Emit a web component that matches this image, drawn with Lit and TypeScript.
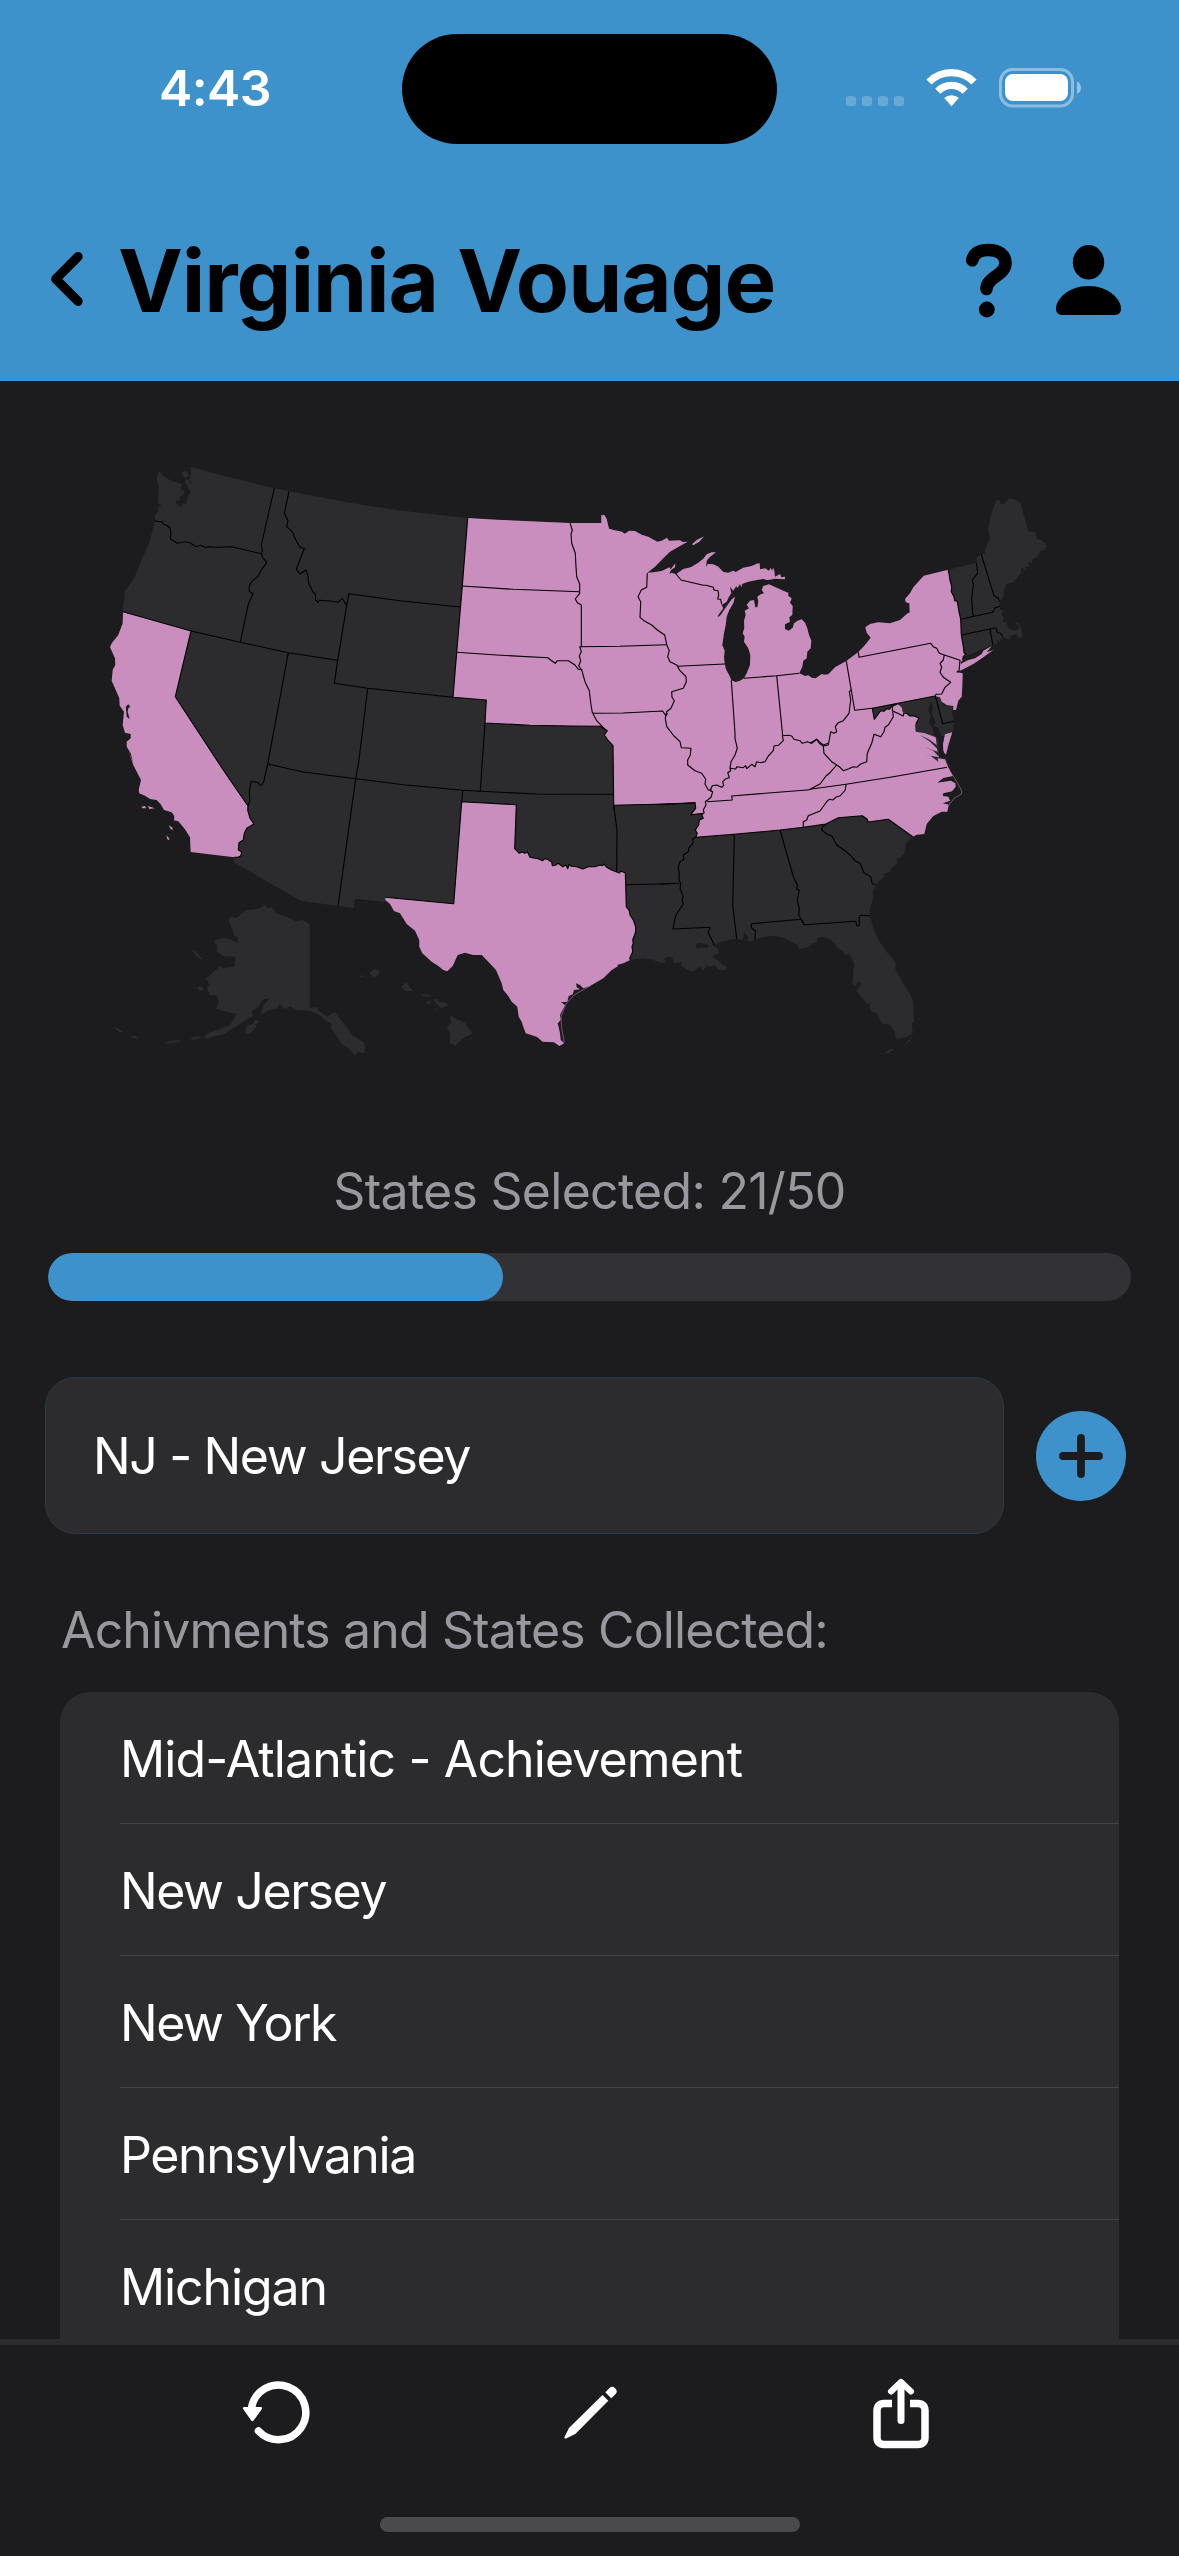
import { LitElement, html, css, svg } from "lit";
import { customElement, property } from "lit/decorators.js";

/* ---------- Map geometry ----------
   Coordinates are kept on seven sheets, three units to a pixel, each with its own origin. */
type Sheet = (points: string) => string;
const sheet = (ox: number, oy: number): Sheet => (points) => {
  const n = points.trim().split(/\s+/).map(Number);
  const out: string[] = [];
  for (let i = 0; i < n.length; i += 2) {
    out.push(`${(ox + n[i] / 3).toFixed(1)},${(oy + n[i + 1] / 3).toFixed(1)}`);
  }
  return out.join(" ");
};
const NW = sheet(90, 450);
const N = sheet(330, 450);
const GL = sheet(570, 500);
const NE = sheet(810, 480);
const SW = sheet(90, 750);
const S = sheet(370, 750);
const SE = sheet(660, 750);

const coastNorthwest =
  NW("208 63 216 75 225 82 245 93 275 102 272 118 284 122 280 135 268 140 272 150 258 153 256 158 266 165 272 173 278 160 290 162 293 140 303 125 298 110 305 98 298 88 303 75 303 50 400 77 553 115 597 124 780 158") +
  " " + N("100 165 200 180 300 192");
const coastLakes =
  N("413 204 500 209 600 214 720 219") + " " +
  GL(`94 69 94 45 104 46 110 57 117 86 134 91 156 95 164 101 178 92 195 93 215 104 235 110 262 125 275 122 291 113
    297 122 330 121 338 126 353 125 330 138 300 155 280 175 255 200 232 218 250 217 275 213 298 202 302 208 316 190
    315 202 303 210 298 222 305 218 318 223 340 207 362 202 385 188 400 176 410 163 425 157 438 157 430 163 416 174
    410 183 408 202 413 192 430 193 445 200 460 216 475 218 490 212 497 216 520 203 545 198 560 191 569 190 570 208
    585 205 597 212 602 203 606 212 610 203 613 212 615 230 630 222 634 232 645 230 645 238 615 236 600 239 590 240
    580 237 565 239 545 243 530 247 517 252 514 262 510 252 502 265 499 258 490 272 480 260 484 280 476 292 470 305
    455 315 460 325 445 345 443 352 452 345 462 330 475 312 485 298 495 290 490 310 478 330 470 350 467 375 462 400
    457 435 464 452 462 470 464 492 468 508 480 530 484 541 497 546 510 542 522 535 530 520 540 495 541 465 535 445
    522 425 524 410 518 400 523 385 522 362 527 345 524 332 537 325 530 315 540 302 552 300 556 322 562 322 565 305
    562 290 572 283 582 280 575 270 580 258 597 253 620 263 640 272 655 278 655 288 665 295 660 308 668 318 667 345
    658 352 660 365 645 373 645 387 656 392 668 383 672 370 683 362 695 358 705 368 712 385 717 405 724 422 722 445
    712 455 710 475 700 482 697 500 688 520 705 528 715 526 725 533 737 535 755 522 768 526`) + " " +
  NE(`15 596 35 585 55 583 75 562 109 543 145 516 165 495 182 473 170 458 166 442 180 432 205 427 240 430 270 420
    290 402 299 397 298 370 287 367 285 357 300 340 310 322 341 287 415 269`);
const coastNewEngland = NE(`499 248 500 232 514 223 524 222 528 200 540 175 534 150 540 125 539 117 550 85 560 60
    568 60 572 72 582 71 600 54 625 64 632 70 655 154 675 157 682 178 695 180 711 198 702 212 694 210 682 230
    668 238 665 250 655 245 656 262 645 258 648 270 632 262 635 277 620 295 607 308 590 312 582 330 580 350 570 365
    568 379 572 390 582 392 573 405 582 412 578 425 590 430 596 445 610 452 625 450 627 438 612 425 627 430 634 450
    638 472 624 474 620 462 600 468 595 478 578 470 570 485 560 478 562 492 548 494 525 505 500 515 462 530`);
const borderVermont = NE("415 269 420 300 425 320 424 335 432 350 434 362 442 364 447 395 452 418 454 465 460 500 462 518 467 522 460 530 458 542");
const coastJersey = NE("452 545 454 560 440 577 458 580 457 620 455 650 445 662 438 690 430 690 430 678 410 675 395 665 390 652");
const coastDelaware = NE("388 650 400 676 425 675 430 690 425 695 432 724 430 745 427 757");
const coastEasternShore = NE("420 780 415 805 407 823 398 830 410 840");
const coastCarolina =
  NE("415 862") + " " +
  SE(`878 78 850 84 832 98 872 92 886 100 887 110 876 124 850 130 848 138 865 140 870 152 848 160 866 164 862 185
    845 185 820 198 800 222 793 252 770 254 758 260`);
const coastSoutheast = SE(`738 280 732 312 718 325 710 328 712 340 695 355 690 365 670 372 673 380 660 390 650 403
    638 425 640 440 635 460 629 480 630 498 640 535 655 570 680 605 707 637 706 658 730 700 752 735 759 755 762 815
    755 822 758 850 740 862 712 867 704 858 706 845 690 825 665 820 655 797 648 788 635 785 628 770 632 756 622 762
    605 742 588 722 604 703 596 693 588 704 583 690 590 712 577 700 580 675 582 640 575 625 568 612 555 615 548 602
    530 592 525 582 510 568 490 561 472 564 472 577 460 580 445 592 417 597 412 585 375 565 345 557 310 560 285 569
    270 575 262 573 265 560 252 546 247 570 230 567 205 571 180 577 163 587 178 602 176 612 160 614 158 620 180 635
    185 642 200 650 197 660 180 660 160 645 150 652 140 645 130 662 120 650 97 665 75 655 62 645 66 636 40 640
    38 625 25 619 12 628 20 637 0 638`);
const coastLouisiana = S("850 630 820 625 800 627");
const coastTexas = S(`779 631 760 640 740 645 720 640 715 632 730 628 733 640 745 648 725 660 700 685 660 708 640 715
    630 705 618 700 620 712 630 718 612 720 608 733 596 738 592 755 573 757 585 765 570 795 572 810 563 820 570 850
    572 870 583 880 568 888 552 877 518 875 500 860 467 850 460 830 455 815 446 800 442 770 425 755 415 738 400 720
    395 700 378 660 355 635 335 615 310 615 285 608 263 615 248 648 232 664 220 660 205 648 185 635 157 610 148 590
    148 570 135 542 110 522 90 490 72 483 60 462 46 450 46 442`);
const coastMexico = SW("886 456 795 446 792 474 744 468 632 452 431 337 433 322");
const coastCalifornia =
  SW(`302 306 300 262 285 238 265 214 252 211 253 198 245 187 222 180 212 163 200 150 180 147 165 137 148 130
    146 120 153 90 130 45 115 0`) + " " +
  NW(`130 940 122 910 110 890 110 875 122 865 122 852 105 848 98 825 102 785 89 767 88 745 65 692 68 660 76 645
    75 625 60 592 65 580 85 555 98 520 99 485`);
const coastOregon = NW("98 470 104 440 103 425 118 405 135 378 160 318 180 270 195 215 195 195 208 180 200 178 214 165 204 160 206 110 200 95 202 75");

const borderNevada = NW("99 485 303 543 256 740 400 960") + " " + SW("474 168");
const riverColorado = SW("474 168 473 180 480 205 492 222 470 235 463 250 460 270 447 278 445 300 455 305 452 318 443 322 433 322");
const borderTexas = S(`46 442 251 461 275 155 439 164 434 296 448 310 456 306 465 310 472 305 480 322 495 325 505 326
    518 332 524 326 532 328 545 336 547 347 556 346 565 340 578 350 588 345 593 356 598 343 604 349 620 350 638 357
    655 350 675 350 690 345 698 347 702 342 710 352 725 360 748 369 752 364 766 368 767 404 769 470 778 482 780 495
    790 510 797 530 797 545 788 570 790 580 786 590 788 605 779 625 782 631`);
const borderMaryland = NE(`375 648 187 685 193 718 205 702 212 692 222 694 230 686 238 688 247 676 262 672 275 682
    278 696 290 700 300 708 312 708 327 714 315 735 317 755 345 760 377 772 380 795 360 780 330 765 360 785 380 805
    383 815 345 802 370 812 388 832 330 823 362 828 385 845 383 835 405 838`);
const borderSouth = SE(`758 260 685 208 624 216 622 208 607 197 535 203 498 222 430 232 360 240 222 253 107 262
    112 250 106 240 116 225 118 210 130 205 125 195 130 190 92 194 107 175 105 158`);
const borderPlains = GL("131 916 129 737 115 722 103 705 112 692 105 688 90 679 0 678") + " " + N("600 826 465 819 469 750 369 742 380 607 397 408 413 204");

const LAND = [
  [coastNorthwest, coastLakes, coastNewEngland, NE("458 542"), coastJersey, coastDelaware, coastEasternShore, coastCarolina,
    coastSoutheast, coastLouisiana, coastTexas, coastMexico, coastCalifornia, coastOregon].join(" "),
  // San Juan and Whidbey islands
  NW("276 68 284 62 292 66 296 76 288 84 278 78"),
  NW("284 92 292 86 300 96 306 118 300 124 292 108"),
  // Alaska
  SW(`415 512 420 500 440 503 468 480 505 477 525 464 532 474 545 472 562 492 590 500 618 514 637 509 659 522 659 773
    682 772 685 782 712 800 734 785 745 800 770 830 790 858 820 875 826 890 822 910 805 905 795 915 775 895 755 882
    740 858 722 835 726 822 708 812 685 792 660 782 620 780 600 768 585 778 570 762 560 775 535 782 512 795 520 765
    540 745 520 748 505 770 485 785 490 797 460 815 430 835 395 855 350 862 340 857 395 835 420 825 440 792 400 782
    378 776 386 755 380 735 360 737 350 712 358 705 349 685 390 648 398 655 432 650 437 620 400 618 380 605 382 587
    370 573 400 563 420 568 445 580 443 562 432 558 428 540`),
  SW("466 850 470 828 495 820 500 830 480 850"),
  SW("490 822 495 808 507 815 500 822"),
  SW("320 712 335 708 342 718 330 724"),
  SW("306 602 320 606 328 618 337 626 328 626 315 612"),
  SW("222 880 245 872 268 870 270 876 240 880"),
  SW("300 864 325 858 335 864 310 870"),
  SW("342 858 362 845 378 858 350 866"),
  SW("72 834 82 834 98 846 90 848"),
  SW("120 856 138 858 145 866 130 864"),
  // Hawaii
  SW("808 684 818 672 818 680"),
  SW("837 670 852 658 868 660 866 674 852 682"),
  S("93 711 110 696 118 710 130 723 106 724"),
  S("152 736 165 733 190 737 172 742"),
  S("168 754 182 754 178 764"),
  S("190 750 202 746 206 756 225 756 235 766 215 775 206 768"),
  S("190 778 200 774 196 780"),
  S("230 830 243 820 240 797 262 808 285 818 297 836 309 850 280 864 256 887 240 880 240 850"),
  // Florida Keys, Nantucket
  SE("668 913 690 898 702 898 690 906"),
  SE("730 887 745 872 756 855 750 874"),
  NE("592 472 605 470 600 476"),
];

const VISITED = [
  [borderNevada, riverColorado, coastCalifornia].join(" "),
  SW("154 170 165 168 168 175 158 175"),
  SW("174 168 185 172 195 175 178 177"),
  SW("236 226 245 232 250 239 242 238"),
  SW("229 256 235 262 239 271 232 268"),
  [borderTexas, coastTexas].join(" "),
  [coastLakes, borderVermont, coastJersey, borderMaryland, coastCarolina, borderSouth, borderPlains].join(" "),
  // Long Island, Isle Royale, Eastern Shore
  NE("440 577 455 550 475 540 495 535 515 522 520 512 545 498 530 517 550 510 520 532 490 552 460 568"),
  GL("366 133 380 120 402 109 388 125 370 136"),
  NE("427 757 405 763 399 790 400 815 408 824 415 795"),
];

const WATER = [
  NE("362 663 355 690 362 705 357 725 368 745 372 765 383 775 386 800 388 830 400 837 405 824 399 810 399 790 403 768 392 768 385 742 372 740 376 725 366 700 369 680"),
  NW("107 770 115 763 121 770 115 775 113 785 119 808 110 800 109 785"),
  SE("106 582 120 578 148 586 140 594 120 592 112 598"),
];

const BORDERS = [
  borderNevada, riverColorado, borderTexas, borderVermont, borderSouth, borderPlains,
  NW("195 213 218 216 220 223 230 226 240 234 243 250 241 266 262 280 285 275 300 278 318 290 332 286 348 293 358 290 380 292 425 290 514 311"),
  NW("553 115 514 285 517 300 514 311 518 322 530 338 515 358 503 380 485 395 478 408 478 424 489 432 475 462 451 577"),
  NW("597 124 583 190 594 212 590 230 607 245 620 275 632 293 643 295 619 358 630 372 648 360 654 378 655 395 668 425 676 433 677 450 684 457 688 451 720 453 745 457 757 445 770 467"),
  NW("303 543 451 577 595 608 743 631"),
  NW("777 430 770 467 743 631 733 700"),
  NW("595 608 533 942") + " " + SW("522 92 516 105 510 106 505 98 483 94 478 125 480 150 474 168"),
  SW("533 42 640 66 797 86 900 99") + " " + S("100 104 278 121 331 124 500 132 731 133"),
  N("113 715 87 930") + " " + SW("797 86 744 468"),
  N("13 700 113 715 369 742"),
  N("56 431 210 452 391 471"),
  N("397 408 550 418 749 425"),
  N("380 607 500 615 653 623 665 632 676 640 682 632 715 632 735 645 745 658 757 659"),
  N("465 819 455 960") + " " + S("331 124"),
  N("720 219 727 240 723 252 725 280 736 310 738 350 740 380 749 402 749 430 736 447 742 458 754 465 754 590"),
  GL("29 440 150 439 290 434"),
  GL("29 440 34 455 28 468 32 482 26 498 35 510 45 545 58 572 63 615 67 637 80 662 105 688"),
  GL("69 640 160 639 278 633 287 647 293 640"),
  GL("232 220 230 262 214 270 204 290 212 305 210 352 222 362 245 375 262 390 284 405 290 434"),
  GL("290 434 298 452 293 470 300 485 320 495 330 512 348 530 349 545 340 565 305 575 306 592 313 602 303 625 290 635 286 655 290 680 312 708 330 725 334 743 363 745 361 765 353 780 353 795 375 812 395 820 407 838 405 852 415 870 426 870"),
  GL("322 499 464 492"),
  GL("318 222 333 240 400 256 408 256 430 262 432 270 444 272 446 285 443 297 452 298 455 313"),
  GL("484 541 495 700 495 715 502 745 495 765 483 785 480 805"),
  GL(`420 872 427 857 440 855 455 862 461 856 458 845 468 836 478 833 473 818 482 812 480 805 497 807 500 800 520 803
    527 797 530 806 545 793 555 800 560 785 572 788 585 785 595 768 610 752 612 738 625 736 640 722 637 707 655 706
    665 708 672 718 690 722 697 730 712 725 725 730 740 718 748 725 760 735 775 730`),
  NE("0 790 20 778 28 790 40 798 55 795 62 755 72 760 80 755 76 740 85 728 100 722 117 700 122 660 118 635 124 630"),
  NE("40 798 42 820 65 845 80 855"),
  GL("522 535 620 527 688 520"),
  GL("620 527 638 707"),
  NE("109 543 134 691 187 685"),
  NE("145 516 147 532 362 490 370 500 380 505 388 520 403 525 450 541 447 572 440 577"),
  NE("403 525 400 540 390 550 395 562 390 577 400 592 422 607 405 622 395 642 378 643 375 648"),
  NE("376 648 398 731 432 724"),
  NE("375 648 187 685 193 718 205 702 212 692 222 694 230 686 238 688 247 676 262 672"),
  NE("280 700 290 700 300 708 312 708 327 714 318 732"),
  NE("262 672 248 678 247 692 280 708 282 698"),
  NE("248 695 250 710 235 735 225 742 222 755 212 770 192 763 185 790 172 820 170 845 152 852 140 862 130 860 116 866 100 872 90 862 80 855"),
  NE("80 855 58 880 48 888 30 912 0 928"),
  NE("0 928 108 913 250 890 412 862"),
  GL("720 869 485 888 487 900 412 905"),
  SE("558 103 556 120 540 138 530 140 518 150 508 148 500 155 480 183 445 197 440 210 430 215 430 232"),
  SE("150 122 158 125 153 142 143 150 136 155 138 165 130 180 133 190"),
  SE("107 262 98 268 100 278 86 295 85 305 70 315 72 328 60 335 55 350 58 370 57 390 62 400 60 415 70 440 66 450 70 462 48 495 43 515 39 537 150 532 145 548 158 575 163 587"),
  SE("0 164 105 158"), GL("131 916 260 913 377 908"),
  SE("0 402 58 400"), S("768 404 900 401"),
  S("731 166 741 240 740 365"), GL("131 916 132 930"),
  S("278 121 275 155"),
  SE("218 252 223 258 218 465 230 567"),
  SE("360 240 400 380 412 405 410 418 418 420 412 450 418 475 416 495 433 524"),
  SE("285 569 286 543 273 532 275 521 423 508 433 524 587 514 590 527 598 527 597 505 602 496 630 498"),
  SE("498 222 487 232 485 240 500 252 515 257 530 285 555 302 575 320 585 332 600 340 612 368 632 380 637 402 648 403"),
  NE("499 248 503 280 487 300 490 315 485 355 488 400 492 408"),
  NE("452 418 548 397 555 383 570 379"),
  NE("514 223 552 347 565 355 570 365"),
  NE("454 465 540 447 557 443 562 458 572 460 578 470"),
  NE("540 447 545 475 548 494"),
];
const OUTER_BANKS = SE("862 52 880 78 892 98 905 122 904 132 882 145 866 166");
const PADRE_ISLAND = S("583 876 575 835 573 800 588 762 612 735 660 708");

@customElement("usa-map")
class UsaMap extends LitElement {
  static styles = css`
    :host { display: block; }
    .map { display: block; width: 1179px; height: 749px; }
    .land { fill: #2c2c2e; }
    .visited { fill: #c98dbe; }
    .water { fill: #1c1c1e; }
    .border { fill: none; stroke: #000; stroke-width: 1.1; stroke-linejoin: round; }
    .bank { fill: none; stroke: #c98dbe; stroke-width: 0.7; opacity: 0.7; }
  `;
  render() {
    return html`<svg class="map" viewBox="0 381 1179 749">
      ${LAND.map((p) => svg`<polygon class="land" points=${p} />`)}
      ${VISITED.map((p) => svg`<polygon class="visited" points=${p} />`)}
      ${WATER.map((p) => svg`<polygon class="water" points=${p} />`)}
      ${BORDERS.map((p) => svg`<polyline class="border" points=${p} />`)}
      <polyline class="bank" points=${OUTER_BANKS} />
      <polyline class="bank" points=${PADRE_ISLAND} />
    </svg>`;
  }
}

@customElement("status-bar")
class StatusBar extends LitElement {
  static styles = css`
    :host { display: grid; grid-template-columns: 402px 375px 402px; height: 110px; align-items: center; }
    .time { padding: 0 0 2px 159px; font-weight: 600; font-size: 50px; line-height: 60px; letter-spacing: -0.6px; color: #fff; }
    .island { height: 110px; border-radius: 55px; background: #000; }
    .signals { display: flex; justify-content: flex-end; padding: 0 98px 2px 0; }
    svg { display: block; }
  `;
  render() {
    return html`
      <div class="time">4:43</div>
      <div class="island"></div>
      <div class="signals">
        <svg width="237" height="40" viewBox="844 68 237 40">
          <g fill="#fff" fill-opacity=".22">
            <rect x="846" y="96" width="10" height="10" rx="3" />
            <rect x="862" y="96" width="10" height="10" rx="3" />
            <rect x="878" y="96" width="10" height="10" rx="3" />
            <rect x="894" y="96" width="10" height="10" rx="3" />
          </g>
          <g fill="none" stroke="#fff" stroke-width="7.2">
            <path d="M929 82a31.500 31.500 0 0 1 45 0" />
            <path d="M937.800 91.200a19 19 0 0 1 27.400 0" />
          </g>
          <path d="M951.500 106.300l-7.300-8.300a10.800 10.800 0 0 1 14.600 0z" fill="#fff" />
          <rect x="1000.500" y="69.500" width="72" height="36.400" rx="12" fill="none" stroke="#fff" stroke-opacity=".4" stroke-width="3" />
          <rect x="1005" y="74" width="63" height="27" rx="8" fill="#fff" />
          <path d="M1077 81.500v12.500c2.600-1 4-3.500 4-6.200s-1.400-5.300-4-6.300z" fill="#fff" fill-opacity=".45" />
        </svg>
      </div>`;
  }
}

@customElement("app-root")
class AppRoot extends LitElement {
  @property({ type: Number }) selected = 21;
  @property({ type: Number }) total = 50;
  items = [
    { name: "Mid-Atlantic - Achievement", tracking: -0.88 },
    { name: "New Jersey", tracking: -1.4 },
    { name: "New York", tracking: -1.5 },
    { name: "Pennsylvania", tracking: -1.4 },
    { name: "Michigan", tracking: -1.1 },
  ];

  static styles = css`
    :host {
      display: flex; flex-direction: column; width: 1179px; height: 2556px; overflow: hidden;
      background: #1c1c1e; color: #fff; font-family: Inter, "Liberation Sans", sans-serif;
      font-size: 50px; line-height: 60px; letter-spacing: -0.72px;
    }
    svg { display: block; flex: none; }
    .header { flex: none; height: 381px; box-sizing: border-box; padding-top: 34px; background: #3e92cc; color: #000; }
    .nav { display: flex; align-items: center; height: 112px; margin-top: 81px; padding: 0 57px 0 49px; }
    .title { flex: 1; margin: 0 0 1px 32px; font-size: 87px; line-height: 104px; font-weight: 700; letter-spacing: -1.1px; white-space: nowrap; }
    .actions { display: flex; gap: 42px; align-items: center; }
    .body { flex: 1; min-height: 0; display: flex; flex-direction: column; overflow: hidden; }
    .count { margin: 31px 0 0; text-align: center; color: #98989e; }
    .track { flex: none; height: 48px; margin: 32px 48px 0; border-radius: 24px; background: #323136; overflow: hidden; }
    .fill { height: 100%; border-radius: 24px; background: #3e92cc; }
    .entry { display: flex; align-items: center; justify-content: space-between; margin: 76px 53px 0 45px; }
    .field { box-sizing: border-box; width: 959px; height: 157px; padding: 48px 47px; border-radius: 30px; background: #2c2c2e; border: 1px solid #2b3a45; letter-spacing: -1.36px; }
    .caption { margin: 66px 0 0 61px; color: #98989e; letter-spacing: -0.87px; }
    .list { flex: none; margin: 32px 60px 0; padding: 0; border-radius: 30px 30px 0 0; background: #2c2c2e; list-style: none; }
    .row { box-sizing: border-box; height: 132px; margin-left: 60px; padding-top: 37px; border-bottom: 1px solid #464648; }
    .toolbar { flex: none; box-sizing: border-box; height: 217px; border-top: 6px solid #2c2c2e; display: flex; flex-direction: column; align-items: center; justify-content: space-between; padding-bottom: 24px; }
    .tools { display: flex; align-items: center; justify-content: space-between; box-sizing: border-box; width: 100%; height: 136px; padding: 0 250px 0 241px; }
    .home { width: 420px; height: 15px; border-radius: 8px; background: #4a4a4a; }
  `;

  render() {
    return html`
      <header class="header">
        <status-bar></status-bar>
        <div class="nav">
          <svg width="37" height="60" viewBox="0 0 37 60"><path d="M29 5.700L6.800 28 29 50.300" fill="none" stroke="#000" stroke-width="9.400" stroke-linecap="round" stroke-linejoin="round" /></svg>
          <h1 class="title">Virginia Vouage</h1>
          <div class="actions">
            <svg width="50" height="76" viewBox="964 242 50 76">
              <path d="M972.200 259.300C974 251.700 980 249 988.500 249c10.500 0 17 5 17 13 0 13-19 13.500-19 26" fill="none" stroke="#000" stroke-width="12.600" stroke-linecap="round" stroke-linejoin="round" />
              <circle cx="986.800" cy="308.500" r="7.900" />
            </svg>
            <svg width="66" height="76" viewBox="1056 242 66 76">
              <ellipse cx="1088.500" cy="261.300" rx="15.700" ry="17.200" />
              <path d="M1063 314c-4.500 0-7-2-7-6.500 0-9 12-22.500 32.500-22.500s32.500 13.500 32.500 22.500c0 4.500-2.500 6.500-7 6.500z" />
            </svg>
          </div>
        </div>
      </header>
      <main class="body">
        <usa-map></usa-map>
        <p class="count">States Selected: ${this.selected}/${this.total}</p>
        <div class="track"><div class="fill" style="width:${(this.selected / this.total) * 100}%"></div></div>
        <div class="entry">
          <div class="field">NJ - New Jersey</div>
          <svg width="90" height="90" viewBox="0 0 90 90"><circle cx="45" cy="45" r="45" fill="#3e92cc" /><path d="M45 27v36M27 45h36" stroke="#1c1c1e" stroke-width="7.800" stroke-linecap="round" /></svg>
        </div>
        <p class="caption">Achivments and States Collected:</p>
        <ul class="list">
          ${this.items.map((i) => html`<li class="row" style="letter-spacing:${i.tracking}px">${i.name}</li>`)}
        </ul>
      </main>
      <footer class="toolbar">
        <div class="tools">
          <svg width="70" height="70" viewBox="241 2377 70 70">
            <path d="M251.500 2407a27.300 27.300 0 1 1 7 23" fill="none" stroke="#fff" stroke-width="7.500" stroke-linecap="round" />
            <path d="M244.500 2406h16c1.500 0 2 1 1.200 2.300l-8 11c-.9 1.200-1.900 1.200-2.700 0l-7.700-11c-.8-1.300-.3-2.300 1.200-2.300z" fill="#fff" />
          </svg>
          <svg width="60" height="60" viewBox="562 2382 60 60" fill="#fff">
            <path d="M602.500 2394l5.800 5.800-33 33.200-9.300 4.600c-1 .4-1.900-.5-1.500-1.500l4.500-9.200z" />
            <path d="M605.300 2391.300l4-4c1.800-1.800 4-1.900 5.600-.3l.7.700c1.600 1.600 1.600 3.800-.2 5.600l-4.200 4z" />
          </svg>
          <svg width="56" height="74" viewBox="873.500 2376.500 56 74" fill="none" stroke="#fff" stroke-width="7.500" stroke-linecap="round" stroke-linejoin="round">
            <path d="M892.500 2404h-8c-4.500 0-7 2.500-7 7v27c0 4.500 2.500 7 7 7h34c4.500 0 7-2.500 7-7v-27c0-4.500-2.500-7-7-7h-8" stroke-linecap="butt" />
            <path d="M901.500 2384v37" stroke-width="7" />
            <path d="M891.500 2392l10-9.500 10 9.500" stroke-width="6" />
          </svg>
        </div>
        <div class="home"></div>
      </footer>`;
  }
}
